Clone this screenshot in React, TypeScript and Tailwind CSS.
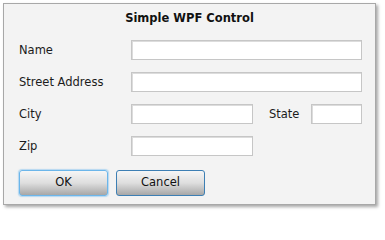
import React from "react";

const font = { fontFamily: '"DejaVu Sans", Verdana, sans-serif' };

function Field({ w }: { w: string }) {
  return (
    <div
      className={`${w} h-[20px] bg-white border border-[#c6c6c6] shadow-[inset_1px_1px_0_#dcdcdc]`}
    />
  );
}

function Label({ children, w }: { children: React.ReactNode; w: string }) {
  return <div className={`${w} text-[11.5px] leading-[20px] text-[#1b1b1b]`}>{children}</div>;
}

export default function App() {
  return (
    <div className="w-[385px] h-[214px] bg-white pt-[3px] pl-[3px]" style={font}>
      <div className="w-[373px] h-[202px] bg-[#f3f3f3] border border-[#a8a8a8] shadow-[2px_2px_3px_rgba(0,0,0,0.35)] pt-[7px] pl-[15px] flex flex-col">
        <div className="text-[11.5px] leading-[14px] font-bold text-[#111] text-center pr-[15px] mb-[15px]">
          Simple WPF Control
        </div>
        <div className="flex flex-col gap-[12px]">
          <div className="flex">
            <Label w="w-[112px]">Name</Label>
            <Field w="w-[231px]" />
          </div>
          <div className="flex">
            <Label w="w-[112px]">Street Address</Label>
            <Field w="w-[231px]" />
          </div>
          <div className="flex">
            <Label w="w-[112px]">City</Label>
            <Field w="w-[122px]" />
            <div className="w-[16px]" />
            <Label w="w-[42px]">State</Label>
            <Field w="w-[51px]" />
          </div>
          <div className="flex">
            <Label w="w-[112px]">Zip</Label>
            <Field w="w-[122px]" />
          </div>
        </div>
        <div className="flex gap-[8px] mt-[14px]">
          <button className="w-[89px] h-[26px] rounded-[3px] border border-[#6cb6ea] shadow-[0_0_1px_1px_rgba(120,190,240,0.5)] bg-gradient-to-b from-[#f6f6f6] via-[#dedede] to-[#a7a7a7] text-[11.5px] text-[#111]">
            OK
          </button>
          <button className="w-[89px] h-[26px] rounded-[3px] border border-[#3d7fb4] bg-gradient-to-b from-[#f6f6f6] via-[#dedede] to-[#a7a7a7] text-[11.5px] text-[#111]">
            Cancel
          </button>
        </div>
      </div>
    </div>
  );
}
